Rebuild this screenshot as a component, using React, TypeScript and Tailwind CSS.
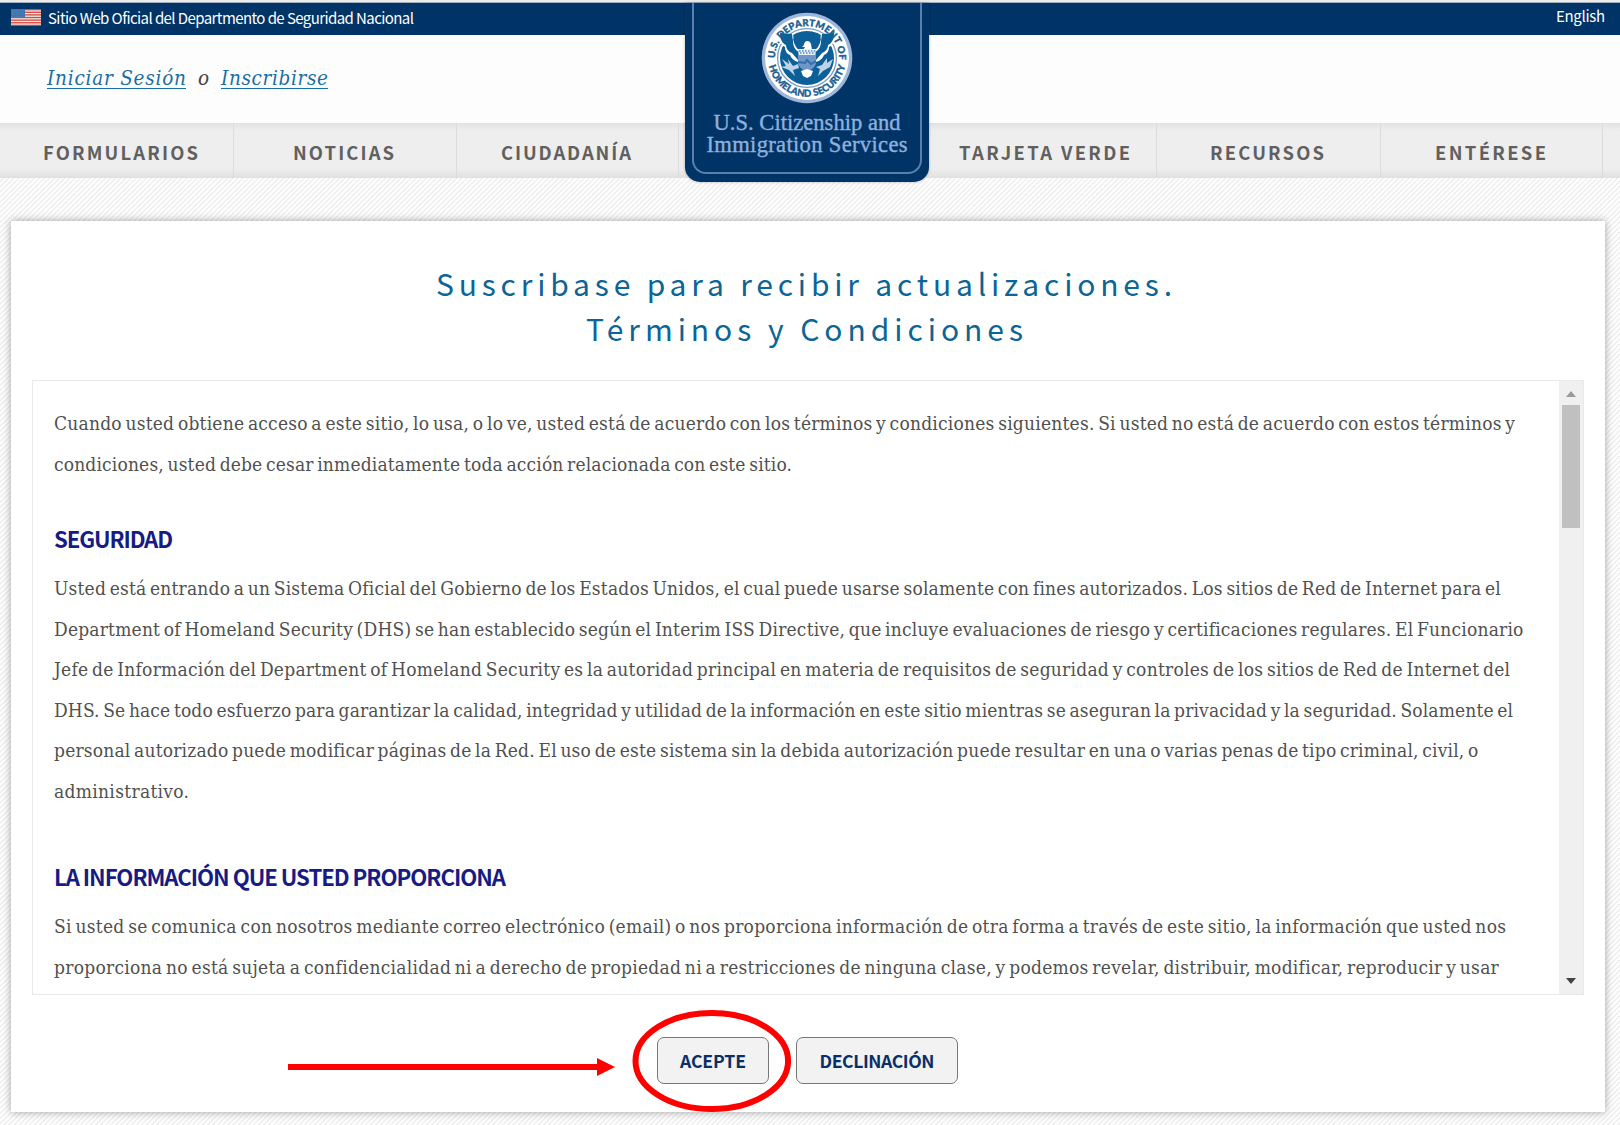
import { useLayoutEffect, useRef, useState } from "react";

const SANS = "font-['Noto_Sans_CJK_SC','Noto_Sans',sans-serif]";
const SLAB = "font-['DejaVu_Serif_Condensed','DejaVu_Serif',serif]";

/* Text tracked out or in so that it takes up exactly the given width. */
function Fit({ w, className = "", children }: { w: number; className?: string; children: string }) {
  const ref = useRef<HTMLSpanElement>(null);
  const [spacing, setSpacing] = useState(0);
  useLayoutEffect(() => {
    const natural = ref.current!.getBoundingClientRect().width;
    setSpacing((w - natural) / Math.max(1, children.length - 1));
  }, [w, children]);
  return (
    <span
      ref={ref}
      className={`inline-block whitespace-nowrap ${className}`}
      style={{ letterSpacing: `${spacing}px`, marginRight: `${-spacing}px` }}
    >
      {children}
    </span>
  );
}

function Flag() {
  return (
    <svg viewBox="0 0 30 17" className="mt-[6px] h-[17px] w-[30px]">
      <rect width="30" height="17" fill="#f3e9e8" />
      {[0, 1, 2, 3, 4, 5, 6].map((i) => (
        <rect key={i} y={i * 2.62} width="30" height="1.31" fill="#d2473f" />
      ))}
      <rect width="14" height="9" fill="#3f74ae" />
      {[1.5, 3.5, 5.5, 7.5].map((y) => (
        <path key={y} d={`M1 ${y}H13`} stroke="#5f8fc0" strokeWidth=".6" strokeDasharray="1 1.2" />
      ))}
    </svg>
  );
}

function Seal() {
  return (
    <svg viewBox="-46 -46 92 92" className="h-[92px] w-[92px]">
      <defs>
        <path id="arcTop" d="M-27.5 16.5A32 32 0 1 1 27.5 16.5" />
        <path id="arcBottom" d="M-38.3 7A39 39 0 0 0 38.3 7" />
      </defs>
      <circle r="45.3" fill="#9db6da" />
      <circle r="42" fill="#fff" />
      <circle r="29.4" fill="#fff" stroke="#7b9cc8" strokeWidth="1.3" />
      <circle r="27" fill="#0d5f98" />
      {/* wings */}
      <path
        d="M-28-24C-28-17-26-13-22-11C-22-7-20-4-17-3C-16 0-13 3-9 4L9 4C13 3 16 0 17-3C20-4 22-7 22-11C26-13 28-17 28-24C22-20 18-21 14-25L13-15L9-9L-9-9L-13-15L-14-25C-18-21-22-20-28-24Z"
        fill="#fff"
      />
      <path
        d="M-15-24L-27-25C-27-19-25-15-21-13C-21-9-18-6-15-5L-9 2L-8-6C-12-8-14-12-14-17Z M15-24L27-25C27-19 25-15 21-13C21-9 18-6 15-5L9 2L8-6C12-8 14-12 14-17Z"
        fill="#0d5f98"
      />
      <path d="M-14-19L-11-11L-8-8H8L11-11L14-19C7-24-7-24-14-19Z" fill="#0d5f98" />
      {/* head */}
      <path d="M-3-13C-3-18 3-18 4-14L5-8H-4L-2-11L-5-11Z" fill="#fff" />
      {/* shield */}
      <path d="M-9-9H9V4C9 9 4 12 0 14C-4 12-9 9-9 4Z" fill="#6f96c6" />
      <path d="M-9-9H9L8-3H-8Z" fill="#e6eef7" />
      <path d="M-8-7H8M-7-5H7" stroke="#0d5f98" strokeDasharray="1.5 1.5" />
      <path d="M-9 4L-2 5L0 2L4 6L9 3" fill="none" stroke="#2f72ab" strokeWidth="2" />
      {/* tail */}
      <path d="M-6 13L0 11L6 13L4 18L0 20L-4 18Z" fill="#fff" />
      {/* olive branch and arrows */}
      <path
        d="M-9 6L-14 8L-19 1L-18 6L-25 1L-21 8L-26 9L-18 12L-12 18L-14 12L-8 10Z"
        fill="#bcd3e8"
      />
      <path d="M9 9L15 7L20 0L20 5L26 1L23 9L16 13L11 18L13 11Z" fill="#bcd3e8" />
      <g
        className="font-['Lato',sans-serif] font-black"
        fill="#1a6091"
        stroke="#1a6091"
        strokeWidth=".35"
        fontSize="9.6"
      >
        <text>
          <textPath href="#arcTop" startOffset="17" textLength="102">
            U.S. DEPARTMENT OF
          </textPath>
        </text>
        <text>
          <textPath href="#arcBottom" startOffset="1" textLength="106">
            HOMELAND SECURITY
          </textPath>
        </text>
      </g>
    </svg>
  );
}

function Logo() {
  return (
    <div className="absolute left-[685px] top-[3px] z-10 flex h-[179px] w-[244px] justify-center rounded-b-[15px] bg-[#003366] px-[7px] pb-[8px] shadow-[0_0_3px_rgba(0,0,0,0.3)]">
      <div className="flex h-full w-full flex-col items-center rounded-b-[14px] border-x-2 border-b-2 border-[#5a7fae] pt-[9px] font-['Liberation_Serif',serif] text-[22.5px] leading-[22px] text-[#8fb0dc]">
        <Seal />
        <div className="mt-[8px] [-webkit-text-stroke:0.4px_#8fb0dc]">
          <Fit w={187}>U.S. Citizenship and</Fit>
        </div>
        <div className="[-webkit-text-stroke:0.4px_#8fb0dc]">
          <Fit w={201}>Immigration Services</Fit>
        </div>
      </div>
    </div>
  );
}

function NavItem({ label, w, className }: { label: string; w: number; className: string }) {
  return (
    <a className={`flex h-full shrink-0 items-start border-[#dcdcdc] pt-[5px] ${className}`}>
      <Fit w={w}>{label}</Fit>
    </a>
  );
}

function Lines({ rows, className = "" }: { rows: [string, number][]; className?: string }) {
  return (
    <p className={`text-[19px] leading-[40.55px] [word-spacing:-2px] text-[#505050] ${SLAB} ${className}`}>
      {rows.map(([text, w]) => (
        <span key={text} className="block">
          <Fit w={w}>{text}</Fit>
        </span>
      ))}
    </p>
  );
}

function Heading({ w, className, children }: { w: number; className: string; children: string }) {
  return (
    <h2 className={`h-[40px] text-[22.2px] font-bold leading-[40px] text-[#171c84] ${SANS} ${className}`}>
      <Fit w={w}>{children}</Fit>
    </h2>
  );
}

export default function App() {
  return (
    <div className="relative flex h-[1125px] w-[1620px] flex-col overflow-hidden bg-[repeating-linear-gradient(135deg,#ffffff_0px,#fbfbfb_1.8px,#e8e8e8_2.7px,#ffffff_3.6px)]">
      <div className="h-[3px] shrink-0 border-b border-[#a3b0c0] bg-[#ececec]" />
      <header className={`flex h-[32px] shrink-0 justify-between bg-[#003366] pl-[11px] pr-[15px] text-[15px] text-white ${SANS}`}>
        <div className="flex">
          <Flag />
          <div className="ml-[7px] pt-[3px] leading-[24px]">
            <Fit w={366}>Sitio Web Oficial del Departmento de Seguridad Nacional</Fit>
          </div>
        </div>
        <div className="pt-px leading-[24px]">
          <Fit w={49}>English</Fit>
        </div>
      </header>
      <Logo />

      <div className={`flex h-[88px] shrink-0 bg-[#fdfdfd] pl-[47px] pt-[28px] text-[20.5px] italic leading-[30px] text-[#1a6ea6] ${SLAB}`}>
        <a className="h-[26px] border-b-[1.5px] border-[#1a6ea6]">
          <Fit w={139}>Iniciar Sesión</Fit>
        </a>
        <span className="ml-[12px] w-[23px] text-[#444]">o</span>
        <a className="h-[26px] border-b-[1.5px] border-[#1a6ea6]">
          <Fit w={107}>Inscribirse</Fit>
        </a>
      </div>

      <nav className={`flex h-[55px] shrink-0 bg-[linear-gradient(#e2e2e2,#eeeeee_8px,#eeeeee_46px,#e0e0e0)] text-[18.4px] font-bold leading-[48px] text-[#606060] ${SANS}`}>
        <NavItem label="FORMULARIOS" w={155} className="w-[234px] border-r pl-[43px]" />
        <NavItem label="NOTICIAS" w={101} className="w-[223px] border-r pl-[59px]" />
        <NavItem label="CIUDADANÍA" w={130} className="w-[222px] border-r pl-[44px]" />
        <NavItem label="TARJETA VERDE" w={171} className="w-[478px] border-r pl-[280px]" />
        <NavItem label="RECURSOS" w={114} className="w-[224px] border-r pl-[53px]" />
        <NavItem label="ENTÉRESE" w={111} className="w-[222px] border-r pl-[54px]" />
      </nav>

      <main className="ml-[11px] mt-[43px] flex h-[891px] w-[1594px] shrink-0 flex-col bg-white pl-[21px] shadow-[0_0_8px_rgba(0,0,0,0.36)]">
        <h1 className={`flex h-[159px] flex-col pt-[40px] text-[30px] leading-[45px] text-[#0b6596] ${SANS}`}>
          <span className="pl-[404px]">
            <Fit w={736}>Suscribase para recibir actualizaciones.</Fit>
          </span>
          <span className="pl-[554px]">
            <Fit w={437}>Términos y Condiciones</Fit>
          </span>
        </h1>

        <section className="flex h-[615px] w-[1552px] shrink-0 border border-[#e9e9e9]">
          <div className="h-full w-[1526px] overflow-hidden pl-[21px]">
            <Lines
              className="mt-[22px]"
              rows={[
                ["Cuando usted obtiene acceso a este sitio, lo usa, o lo ve, usted está de acuerdo con los términos y condiciones siguientes. Si usted no está de acuerdo con estos términos y", 1461],
                ["condiciones, usted debe cesar inmediatamente toda acción relacionada con este sitio.", 738],
              ]}
            />
            <Heading w={119} className="mt-[34px]">SEGURIDAD</Heading>
            <Lines
              className="mt-[10px]"
              rows={[
                ["Usted está entrando a un Sistema Oficial del Gobierno de los Estados Unidos, el cual puede usarse solamente con fines autorizados. Los sitios de Red de Internet para el", 1446],
                ["Department of Homeland Security (DHS) se han establecido según el Interim ISS Directive, que incluye evaluaciones de riesgo y certificaciones regulares. El Funcionario", 1469],
                ["Jefe de Información del Department of Homeland Security es la autoridad principal en materia de requisitos de seguridad y controles de los sitios de Red de Internet del", 1456],
                ["DHS. Se hace todo esfuerzo para garantizar la calidad, integridad y utilidad de la información en este sitio mientras se aseguran la privacidad y la seguridad. Solamente el", 1459],
                ["personal autorizado puede modificar páginas de la Red. El uso de este sistema sin la debida autorización puede resultar en una o varias penas de tipo criminal, civil, o", 1424],
                ["administrativo.", 135],
              ]}
            />
            <Heading w={452} className="mt-[45px]">LA INFORMACIÓN QUE USTED PROPORCIONA</Heading>
            <Lines
              className="mt-[10px]"
              rows={[
                ["Si usted se comunica con nosotros mediante correo electrónico (email) o nos proporciona información de otra forma a través de este sitio, la información que usted nos", 1452],
                ["proporciona no está sujeta a confidencialidad ni a derecho de propiedad ni a restricciones de ninguna clase, y podemos revelar, distribuir, modificar, reproducir y usar", 1444],
              ]}
            />
          </div>
          <div className="flex w-[24px] flex-col items-center bg-[#f0f0f0]">
            <svg viewBox="0 0 10 6" className="mt-[10px] h-[6px] w-[10px] shrink-0">
              <path d="M0 6L5 0L10 6Z" fill="#9a9a9a" />
            </svg>
            <div className="mt-[8px] h-[123px] w-[18px] shrink-0 bg-[#c0c0c0]" />
            <svg viewBox="0 0 10 6" className="mb-[10px] mt-auto h-[6px] w-[10px] shrink-0">
              <path d="M0 0L5 6L10 0Z" fill="#444" />
            </svg>
          </div>
        </section>

        <div className={`flex pt-[42px] text-[17.6px] font-bold leading-[45px] text-[#0a2f66] ${SANS}`}>
          <button className="ml-[625px] flex h-[47px] w-[112px] justify-center rounded-[7px] border-[1.5px] border-[#777] bg-[#f2f2f2]">
            <Fit w={66}>ACEPTE</Fit>
          </button>
          <button className="ml-[27px] flex h-[47px] w-[162px] justify-center rounded-[7px] border-[1.5px] border-[#777] bg-[#f2f2f2]">
            <Fit w={115}>DECLINACIÓN</Fit>
          </button>
        </div>
      </main>

      {/* callout marks over the accept button */}
      <svg viewBox="0 0 510 108" className="pointer-events-none absolute left-[286px] top-[1007px] h-[108px] w-[510px]">
        <path d="M2 57H311V51L329 60L311 69V63H2Z" fill="#fe0000" />
        <ellipse cx="425.8" cy="54" rx="76.3" ry="48" fill="none" stroke="#fe0000" strokeWidth="6" />
      </svg>
    </div>
  );
}
